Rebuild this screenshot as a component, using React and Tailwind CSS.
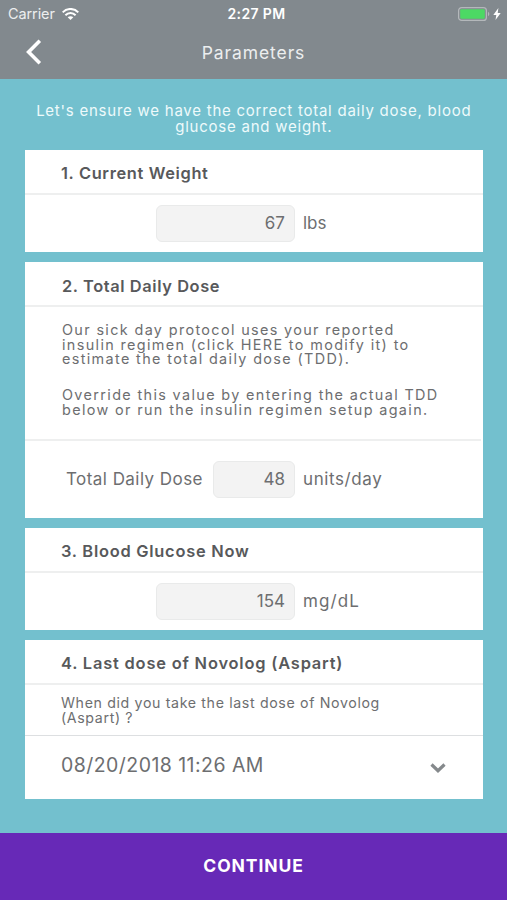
import clsx from 'clsx';

function StatusBar() {
    return (
        <div className="grid h-7 grid-cols-[1fr_auto_1fr] items-center text-white">
            <div className="flex items-center gap-[7px] pl-2 text-[#eceeef]">
                <span className="text-[14.5px] leading-7 tracking-[-0.1px]">Carrier</span>
                <svg className="h-3 w-[17px]" viewBox="0 0 17 12" fill="none" stroke="#fff" strokeWidth="2">
                    <path d="M0.7 4.4C5 -0.2 12 -0.2 16.3 4.4" />
                    <path d="M3.4 7.3C6.3 4.3 10.7 4.3 13.6 7.3" />
                    <path d="M5.7 9.3C7.3 7.8 9.7 7.8 11.3 9.3L8.5 12Z" fill="#fff" stroke="none" />
                </svg>
            </div>
            <span className="pl-1.5 text-[14px] leading-7 font-semibold tracking-[0.35px]">2:27 PM</span>
            <div className="flex items-center justify-end gap-[3px] pr-1.5">
                <svg className="h-[14px] w-8" viewBox="0 0 32 14" fill="none">
                    <rect x="0.6" y="0.6" width="27.8" height="12.8" rx="3" stroke="#b4b8bb" strokeWidth="1.2" />
                    <rect x="2.2" y="2.2" width="24.6" height="9.6" rx="1.2" fill="#4cd964" />
                    <path d="M30 4.8C31.8 5.6 31.8 8.4 30 9.2Z" fill="#b4b8bb" />
                </svg>
                <svg className="h-3 w-2" viewBox="0 0 8 12" fill="#fff">
                    <path d="M5.4 0L0.3 6.9H3.3L2.5 12L7.7 4.9H4.7Z" />
                </svg>
            </div>
        </div>
    );
}

function Header() {
    return (
        <header className="h-[79px] bg-[#82898e]">
            <StatusBar />
            <div className="grid h-[51px] grid-cols-[1fr_auto_1fr] items-center">
                <button type="button" aria-label="Back" className="w-fit pb-1 pl-[25px]">
                    <svg className="h-[26px] w-[17px]" viewBox="0 0 17 26" fill="none" stroke="#fff" strokeWidth="3.6">
                        <path d="M14.8 1.8L3.6 13L14.8 24.2" />
                    </svg>
                </button>
                <h1 className="text-[17.5px] tracking-[0.9px] text-[#eceeef]">Parameters</h1>
            </div>
        </header>
    );
}

function Card({ title, titleClass = 'pl-9 leading-[46px] tracking-[0.65px]', children }) {
    return (
        <section className="bg-white">
            <h2 className={clsx('h-[45px] border-b-2 border-[#eeefef] text-[16.4px] font-semibold text-[#58595b]', titleClass)}>
                {title}
            </h2>
            {children}
        </section>
    );
}

function ValueField({ value, unit, className, unitClass }) {
    return (
        <div className="flex items-center">
            <input
                defaultValue={value}
                className={clsx('h-[37px] rounded-md border border-[#e9eaea] bg-[#f3f3f3] pr-[9px] pb-0.5 text-right text-[17px] outline-none', className)}
            />
            <span className={clsx('ml-2 text-[17px]', unitClass)}>{unit}</span>
        </div>
    );
}

export default function App() {
    return (
        <div className="flex h-[900px] w-full flex-col bg-[#73c0ce] font-['Inter',sans-serif] text-[#6d6e70]">
            <Header />

            <main className="flex-1 pt-6 pr-[24.5px] pl-[25px]">
                <p className="mb-[15px] h-8 text-center text-[15px] leading-4 tracking-[0.76px] whitespace-nowrap text-[#eefafb]">
                    Let's ensure we have the correct total daily dose, blood
                    <br />
                    glucose and weight.
                </p>

                <div className="flex flex-col gap-[10px]">
                    <Card title="1. Current Weight">
                        <div className="flex h-[57px] items-center pl-[131px]">
                            <ValueField value="67" unit="lbs" className="w-[139px]" />
                        </div>
                    </Card>

                    <Card title="2. Total Daily Dose" titleClass="pl-[37px] leading-[48px] tracking-[0.6px]">
                        <div className="mr-0.5 h-[134px] border-b-2 border-[#eeefef] pt-4 pl-[37px] text-[14.4px] leading-[14.7px] tracking-[1.36px] whitespace-nowrap">
                            <p>
                                Our sick day protocol uses your reported
                                <br />
                                insulin regimen (click HERE to modify it) to
                                <br />
                                estimate the total daily dose (TDD).
                            </p>
                            <p className="mt-[21px]">
                                Override this value by entering the actual TDD
                                <br />
                                below or run the insulin regimen setup again.
                            </p>
                        </div>
                        <div className="flex h-[77px] items-center pl-[41px]">
                            <label className="w-[147px] text-[17px] tracking-[0.45px] whitespace-nowrap">Total Daily Dose</label>
                            <ValueField value="48" unit="units/day" className="w-[82px]" unitClass="tracking-[0.6px]" />
                        </div>
                    </Card>

                    <Card title="3. Blood Glucose Now" titleClass="pl-9 leading-[46px] tracking-[0.75px]">
                        <div className="flex h-[57px] items-center pl-[131px]">
                            <ValueField value="154" unit="mg/dL" className="w-[139px]" unitClass="tracking-[1.1px]" />
                        </div>
                    </Card>

                    <Card title="4. Last dose of Novolog (Aspart)" titleClass="pl-9 leading-[46px] tracking-[0.82px]">
                        <p className="h-[51px] border-b border-[#dddfe1] pt-[11px] pl-9 text-[14.2px] leading-[14.5px] tracking-[0.64px] whitespace-nowrap">
                            When did you take the last dose of Novolog
                            <br />
                            (Aspart) ?
                        </p>
                        <button type="button" className="flex h-[63px] w-full items-center justify-between pr-[37px] pb-1 pl-9">
                            <span className="text-[19.5px] tracking-[0.45px]">08/20/2018 11:26 AM</span>
                            <svg className="mt-[5px] h-[10px] w-4" viewBox="0 0 16 10" fill="none" stroke="#85898c" strokeWidth="3.2">
                                <path d="M1.5 1.5L8 7.7L14.5 1.5" />
                            </svg>
                        </button>
                    </Card>
                </div>
            </main>

            <button type="button" className="h-[67px] w-full bg-[#6729b7] text-[17.5px] font-bold tracking-[0.9px] text-white">
                CONTINUE
            </button>
        </div>
    );
}
